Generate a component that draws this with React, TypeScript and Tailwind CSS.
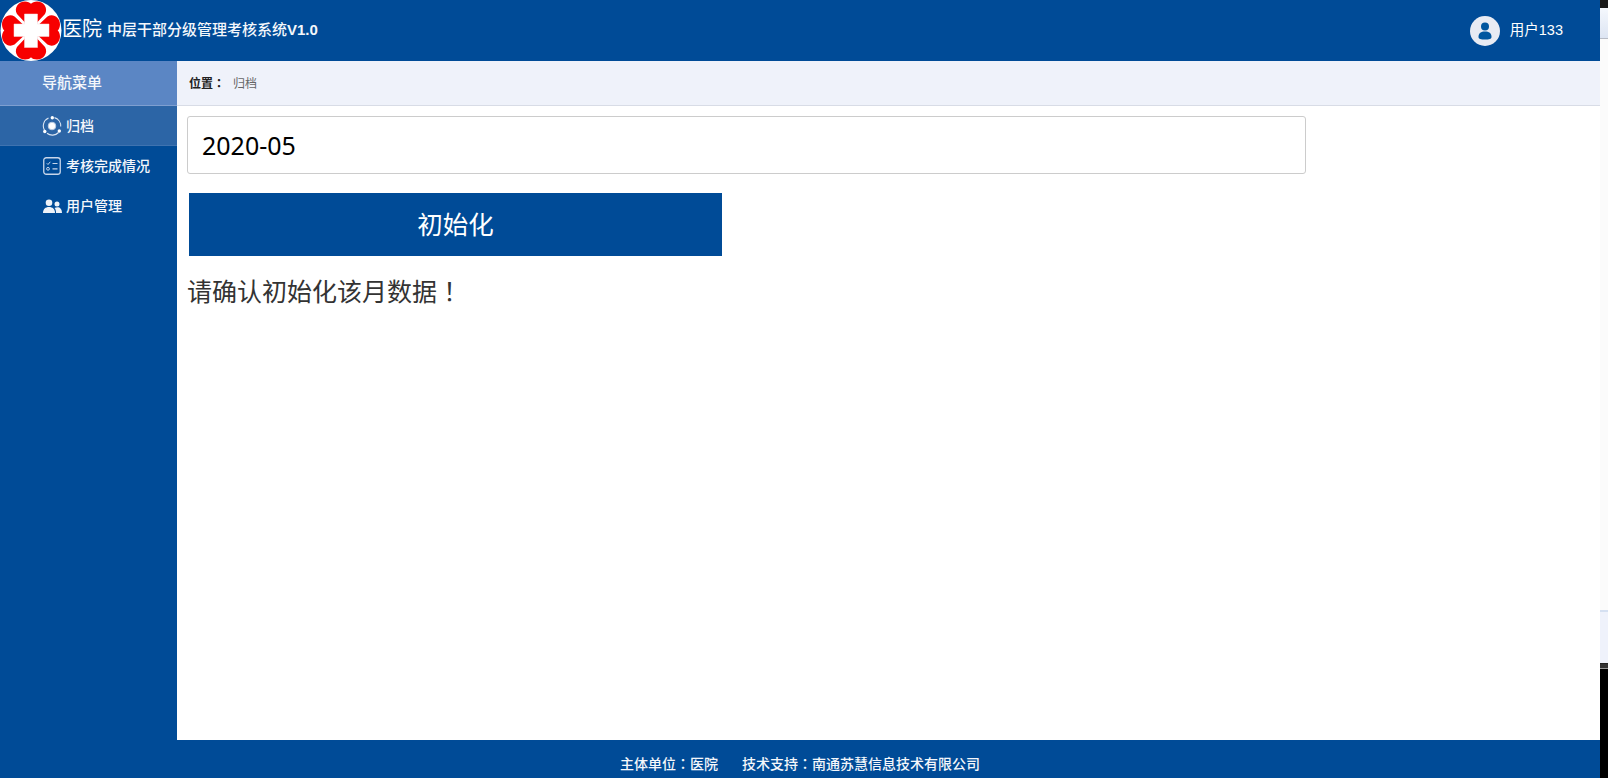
import React from "react";
const font = { fontFamily: '"Liberation Sans", "Noto Sans CJK SC", sans-serif' };
const tc = { fontFamily: '"Noto Sans CJK TC", sans-serif' };
const lobe = "M31 29 L17 14 C13.500 8 18.500 1.500 25 1.500 C27.500 1.500 30 2.500 31 3.800 C32 2.500 34.500 1.500 37 1.500 C43.500 1.500 48.500 8 45 14 Z";
const Logo = () => (
  <svg width="62" height="61" viewBox="0 0 62 61" className="block shrink-0">
    <circle cx="31" cy="30.500" r="30.500" fill="#fff" />
    <g fill="#f70000">
      <path d={lobe} />
      <path d={lobe} transform="rotate(90 31 30.500)" />
      <path d={lobe} transform="rotate(180 31 30.500)" />
      <path d={lobe} transform="rotate(270 31 30.500)" />
    </g>
    <path d="M24.500 14 H37.500 V24 H49 V36.500 H37.500 V47.500 H24.500 V36.500 H14 V24 H24.500 Z" fill="#fff" stroke="#f7dddd" strokeWidth="0.500" />
  </svg>
);
const ArchiveIcon = () => (
  <svg width="20" height="20" viewBox="0 0 20 20" fill="none" className="shrink-0">
    <circle cx="10" cy="10" r="3.800" fill="#fff" stroke="#b9cbe3" strokeWidth="1" />
    <path d="M12.500 1.600 A8.700 8.700 0 0 1 18.700 10.500" stroke="#dce6f3" strokeWidth="1.100" />
    <path d="M2.600 14.500 A8.700 8.700 0 0 1 6.500 2" stroke="#dce6f3" strokeWidth="1.100" />
    <path d="M16.500 16.500 A8.700 8.700 0 0 1 5 17.300" stroke="#dce6f3" strokeWidth="1.100" />
    <circle cx="10.300" cy="1.800" r="1.700" fill="#fff" />
    <circle cx="17.300" cy="15" r="1.700" fill="#fff" />
    <circle cx="2.800" cy="15.500" r="1.700" fill="#fff" />
  </svg>
);
const CheckIcon = () => (
  <svg width="18" height="18" viewBox="0 0 18 18" fill="none" stroke="#c8d6ea" className="shrink-0">
    <rect x="0.750" y="0.750" width="16.500" height="16.500" rx="2.500" strokeWidth="1.300" />
    <path d="M3.800 6.300 L5 7.500 L7.300 4.800" strokeWidth="1" />
    <circle cx="5" cy="11.800" r="1.400" strokeWidth="1" />
    <path d="M9.500 6.500 H14.500 M9.500 11.800 H14.500" strokeWidth="1.200" />
  </svg>
);
const UsersIcon = () => (
  <svg width="19" height="15" viewBox="0 0 19 15" fill="#eef2f8" className="shrink-0">
    <circle cx="6" cy="3.800" r="3.300" />
    <path d="M0 14 C0 10 2.500 8 6 8 C9.500 8 12 10 12 14 Z" />
    <circle cx="14" cy="5" r="2.500" />
    <path d="M13 14 C13 11.500 12.500 10 11.500 9 C12.500 8.300 13.500 8.200 14.500 8.200 C17 8.200 19 10 19 14 Z" />
  </svg>
);
const Avatar = () => (
  <div className="flex h-[30px] w-[30px] items-center justify-center rounded-full bg-[#e8ebf3]">
    <svg width="14" height="18" viewBox="0 0 14 18" fill="#00569f">
      <circle cx="7" cy="4.500" r="4" />
      <path d="M0.500 15 C0.500 11 3 9.500 7 9.500 C11 9.500 13.500 11 13.500 15 C13.500 17 11 17.500 7 17.500 C3 17.500 0.500 17 0.500 15Z" />
    </svg>
  </div>
);
const NavItem = ({ icon, label, className }: { icon: React.ReactNode; label: string; className: string }) => (
  <div className={`flex items-center text-[14px] font-medium text-[#f4f7fb] ${className}`}>
    <div className="flex w-[24px] justify-center">{icon}</div>
    <span className="ml-[2px]">{label}</span>
  </div>
);
export default function App() {
  return (
    <div style={font} className="flex h-[778px] w-[1608px] overflow-hidden bg-white">
      <div className="flex h-[778px] w-[1600px] shrink-0 flex-col">
        <header className="flex h-[61px] shrink-0 items-center bg-[#004b97] text-white">
          <Logo />
          <span className="mt-[-3px] text-[20px] leading-[56px]">医院</span>
          <span className="ml-[5px] mt-[-1px] text-[15px] font-medium text-[#f4f7fb]">中层干部分级管理考核系统<span className="font-bold">V1.0</span></span>
          <div className="ml-auto mr-[37px] flex items-center gap-[10px]">
            <Avatar />
            <span className="text-[14.500px]">用户133</span>
          </div>
        </header>
        <div className="flex min-h-0 flex-1">
          <aside className="flex w-[177px] shrink-0 flex-col bg-[#004b97]">
            <div className="flex h-[45px] shrink-0 items-center border-b border-[#7f9fd0] bg-[#5b86c4] pl-[42px] text-[15px] font-medium text-[#f4f7fb]">导航菜单</div>
            <NavItem icon={<ArchiveIcon />} label="归档" className="h-[40px] border-b border-[#3f73b0] bg-[#2c65a6] pl-[40px] pt-[1px]" />
            <NavItem icon={<CheckIcon />} label="考核完成情况" className="h-[40px] pl-[40px]" />
            <NavItem icon={<UsersIcon />} label="用户管理" className="h-[40px] pl-[40px]" />
          </aside>
          <main className="min-w-0 flex-1">
            <div className="flex h-[45px] items-center border-b border-[#d8dce6] bg-[#eff2fa] pl-[12px] pt-[1px] text-[12px]">
              <span className="font-bold text-[#222]">位置<span style={tc}>：</span></span>
              <span className="ml-[8px] text-[#666]">归档</span>
            </div>
            <div className="pl-[10px] pt-[10px]">
              <div className="flex h-[58px] w-[1119px] items-center rounded-[3px] border border-[#ccc] bg-white pl-[14px] pt-[1px] text-[25px] text-black" style={{ fontFamily: '"Noto Sans", sans-serif' }}>2020-05</div>
              <button className="ml-[2px] mt-[19px] block h-[63px] w-[533px] bg-[#004b97] pt-[1px] text-[25.500px] text-white">初始化</button>
              <p className="mt-[16px] text-[25px] leading-[36px] text-[#333]">请确认初始化该月数据<span style={tc}>！</span></p>
            </div>
          </main>
        </div>
        <footer className="flex h-[38px] shrink-0 items-center justify-center bg-[#004b97] pt-[9px] text-[14px] font-medium text-[#f4f7fb]">
          <span>主体单位<span style={tc}>：</span>医院</span>
          <span className="ml-[24px]">技术支持<span style={tc}>：</span>南通苏慧信息技术有限公司</span>
        </footer>
      </div>
      <div className="flex h-[778px] flex-1 flex-col bg-[#fbfbfb]">
        <div className="h-[8px] bg-[#1a1a1a]" />
        <div className="h-[30px] bg-gradient-to-b from-[#f5f8fd] to-[#dde5f3]" />
        <div className="h-[1px] bg-[#b8bcc6]" />
        <div className="h-[571px] bg-[#fbfbfb]" />
        <div className="h-[2px] bg-[#d5e0f1]" />
        <div className="h-[51px] bg-[#eff2fb]" />
        <div className="h-[1px] bg-[#222]" />
        <div className="h-[4px] bg-[#333]" />
        <div className="h-[1px] bg-[#999]" />
        <div className="flex-1 bg-black" />
      </div>
    </div>
  );
}
